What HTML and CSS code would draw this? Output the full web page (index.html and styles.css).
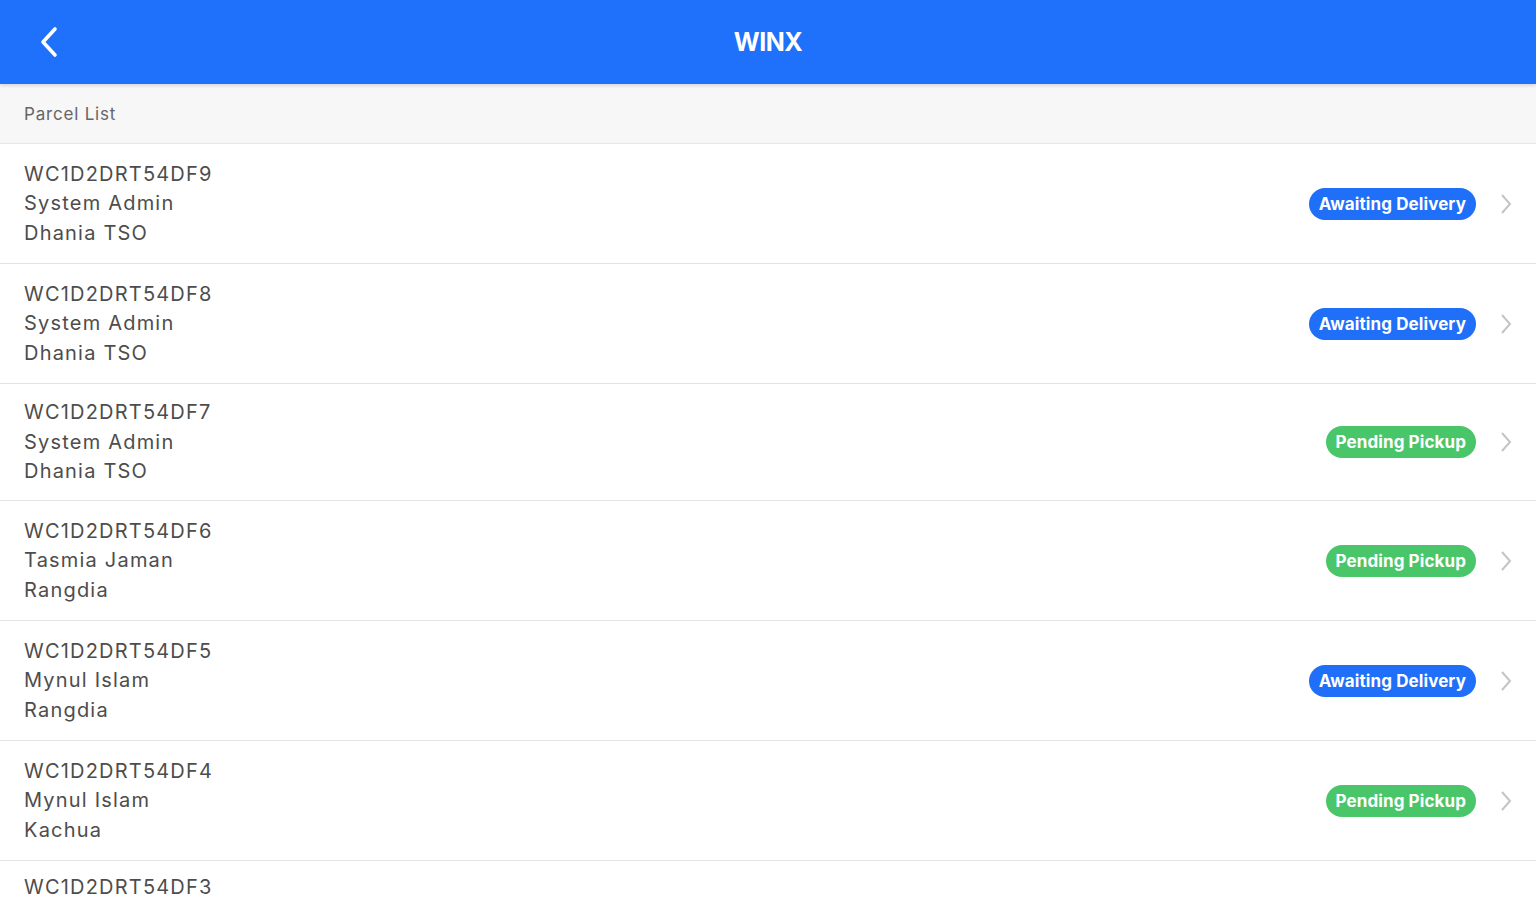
FILE: index.html
```html
<!DOCTYPE html>
<html>
<head>
<meta charset="utf-8">
<link rel="stylesheet" href="styles.css">
</head>
<body>
<header class="topbar">
  <button class="back" aria-label="Back">
    <svg width="26" height="34" viewBox="0 0 26 34"><path d="M19 4 L7 17 L19 30" fill="none" stroke="#fff" stroke-width="3.6" stroke-linecap="round" stroke-linejoin="round"/></svg>
  </button>
  <h1 class="title">WINX</h1>
</header>
<div class="section">Parcel List</div>
<ul class="list">
  <li class="row"><div class="info"><div>WC1D2DRT54DF9</div><div>System Admin</div><div>Dhania TSO</div></div><span class="badge blue">Awaiting Delivery</span><svg class="chev" width="14" height="24" viewBox="0 0 14 24"><path d="M3 3 L11 12 L3 21" fill="none" stroke="#c4c4c4" stroke-width="2"/></svg></li>
  <li class="row"><div class="info"><div>WC1D2DRT54DF8</div><div>System Admin</div><div>Dhania TSO</div></div><span class="badge blue">Awaiting Delivery</span><svg class="chev" width="14" height="24" viewBox="0 0 14 24"><path d="M3 3 L11 12 L3 21" fill="none" stroke="#c4c4c4" stroke-width="2"/></svg></li>
  <li class="row short"><div class="info"><div>WC1D2DRT54DF7</div><div>System Admin</div><div>Dhania TSO</div></div><span class="badge green">Pending Pickup</span><svg class="chev" width="14" height="24" viewBox="0 0 14 24"><path d="M3 3 L11 12 L3 21" fill="none" stroke="#c4c4c4" stroke-width="2"/></svg></li>
  <li class="row"><div class="info"><div>WC1D2DRT54DF6</div><div>Tasmia Jaman</div><div>Rangdia</div></div><span class="badge green">Pending Pickup</span><svg class="chev" width="14" height="24" viewBox="0 0 14 24"><path d="M3 3 L11 12 L3 21" fill="none" stroke="#c4c4c4" stroke-width="2"/></svg></li>
  <li class="row"><div class="info"><div>WC1D2DRT54DF5</div><div>Mynul Islam</div><div>Rangdia</div></div><span class="badge blue">Awaiting Delivery</span><svg class="chev" width="14" height="24" viewBox="0 0 14 24"><path d="M3 3 L11 12 L3 21" fill="none" stroke="#c4c4c4" stroke-width="2"/></svg></li>
  <li class="row"><div class="info"><div>WC1D2DRT54DF4</div><div>Mynul Islam</div><div>Kachua</div></div><span class="badge green">Pending Pickup</span><svg class="chev" width="14" height="24" viewBox="0 0 14 24"><path d="M3 3 L11 12 L3 21" fill="none" stroke="#c4c4c4" stroke-width="2"/></svg></li>
  <li class="row last"><div class="info"><div>WC1D2DRT54DF3</div></div></li>
</ul>
</body>
</html>
```
FILE: styles.css
```css
html, body {
  margin: 0;
  padding: 0;
  background: #ffffff;
  font-family: Inter, "Noto Sans", "Liberation Sans", sans-serif;
  overflow: hidden;
  height: 900px;
}
.topbar {
  height: 84px;
  background: #1f70fa;
  display: flex;
  align-items: center;
  justify-content: center;
  position: relative;
  box-shadow: 0 2px 3px rgba(0,0,0,0.12);
  z-index: 1;
}
.back {
  position: absolute;
  left: 36px;
  top: 25px;
  background: none;
  border: 0;
  padding: 0;
  width: 26px;
  height: 34px;
  display: flex;
}
.title {
  margin: 0;
  color: #fff;
  font-size: 25px;
  font-weight: 700;
  letter-spacing: -0.5px;
}
.section {
  height: 59px;
  background: #f7f7f7;
  border-bottom: 1px solid #e6e6e6;
  display: flex;
  align-items: center;
  padding-left: 24px;
  font-size: 17px;
  letter-spacing: 0.8px;
  color: #666;
}
.list {
  list-style: none;
  margin: 0;
  padding: 0;
}
.row {
  height: 119px;
  border-bottom: 1px solid #e3e3e3;
  display: flex;
  align-items: center;
  padding: 0 23px 0 24px;
}
.row.short {
  height: 116px;
}
.row.last {
  height: 30px;
  align-items: flex-start;
  padding-top: 12px;
  border-bottom: 0;
}
.row.last .info {
  padding-top: 0;
}
.info {
  flex: 1;
  font-size: 20px;
  line-height: 29.5px;
  letter-spacing: 1.2px;
  color: #4d4d4d;
  padding-top: 1px;
}
.badge {
  height: 32px;
  border-radius: 16px;
  display: flex;
  align-items: center;
  padding: 0 10px;
  color: #fff;
  font-size: 17px;
  font-weight: 700;
  letter-spacing: 0.1px;
  margin-right: 23px;
}
.badge.blue { background: #1f6ff8; }
.badge.green { background: #4ac66a; }
.chev { display: block; margin-top: 0; }
```
